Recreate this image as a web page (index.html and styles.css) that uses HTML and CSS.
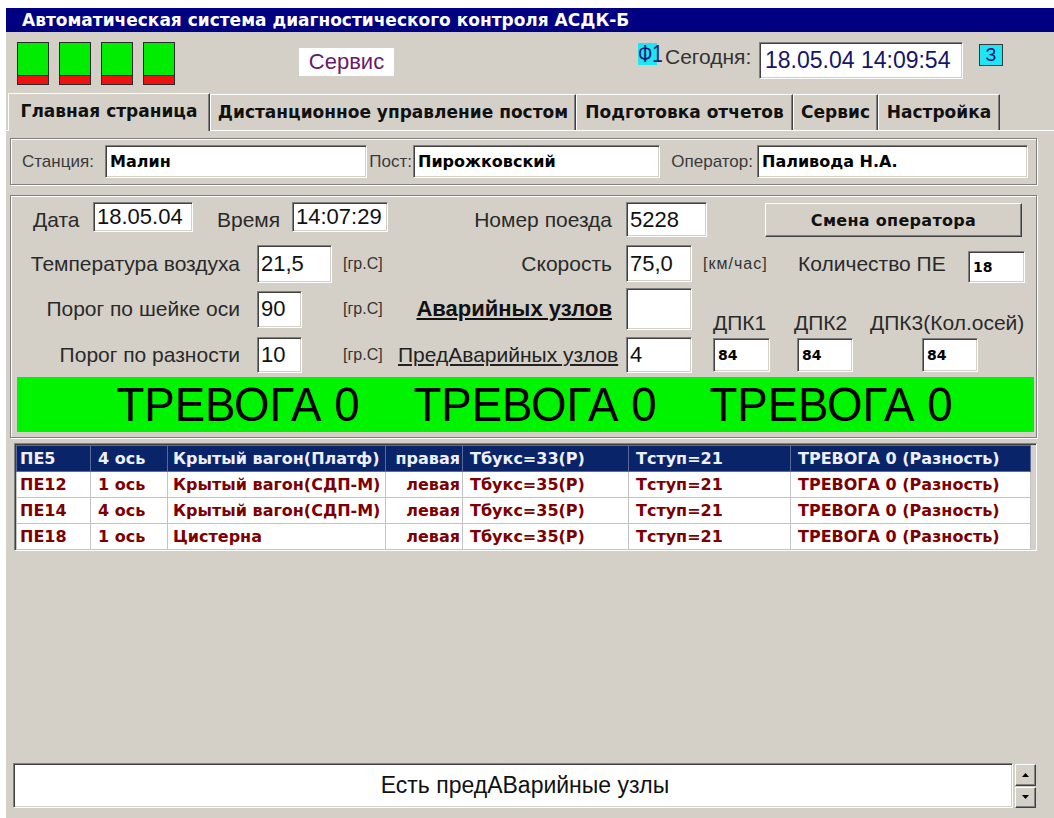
FILE: index.html
```html
<!DOCTYPE html>
<html lang="ru">
<head>
<meta charset="utf-8">
<title>АСДК-Б</title>
<link rel="stylesheet" href="styles.css">
</head>
<body>
<div class="window">
  <div class="titlebar">Автоматическая система диагностического контроля АСДК-Б</div>

  <div class="toolbar">
    <div class="lamps">
      <span class="lamp"></span>
      <span class="lamp"></span>
      <span class="lamp"></span>
      <span class="lamp"></span>
    </div>
    <div class="mode">Сервис</div>
    <div class="fkey"><span>Ф1</span></div>
    <div class="today">Сегодня:</div>
    <div class="now">18.05.04 14:09:54</div>
    <div class="zkey">З</div>
  </div>

  <div class="tabs">
    <div class="tab tab-main active">Главная страница</div>
    <div class="tab tab-remote">Дистанционное управление постом</div>
    <div class="tab tab-reports">Подготовка отчетов</div>
    <div class="tab tab-service">Сервис</div>
    <div class="tab tab-setup">Настройка</div>
  </div>

  <div class="page">
    <div class="group site">
      <span class="cap cap-station">Станция:</span>
      <div class="edit bold w-station">Малин</div>
      <span class="cap cap-post">Пост:</span>
      <div class="edit bold w-post">Пирожковский</div>
      <span class="cap cap-oper">Оператор:</span>
      <div class="edit bold w-oper">Паливода Н.А.</div>
    </div>

    <div class="group form">
      <div class="row row1">
        <span class="cap big c-date">Дата</span>
        <div class="edit num w-date">18.05.04</div>
        <span class="cap big c-time">Время</span>
        <div class="edit num w-time">14:07:29</div>
        <span class="cap big c-mid">Номер поезда</span>
        <div class="edit num w-train">5228</div>
        <button class="btn">Смена оператора</button>
      </div>

      <div class="row row2">
        <span class="cap big c-left">Температура воздуха</span>
        <div class="edit num w-air">21,5</div>
        <span class="unit u-air">[гр.С]</span>
        <span class="cap big c-mid">Скорость</span>
        <div class="edit num w-speed">75,0</div>
        <span class="unit u-speed">[км/час]</span>
        <span class="cap big c-count">Количество ПЕ</span>
        <div class="edit small w-count">18</div>
      </div>

      <div class="row row3">
        <span class="cap big c-left">Порог по шейке оси</span>
        <div class="edit num w-thr">90</div>
        <span class="unit u-thr">[гр.С]</span>
        <span class="cap big c-mid link strong">Аварийных узлов</span>
        <div class="edit num w-alarm"></div>
        <span class="cap big dpk dpk1">ДПК1</span>
        <span class="cap big dpk dpk2">ДПК2</span>
        <span class="cap big dpk dpk3">ДПК3(Кол.осей)</span>
      </div>

      <div class="row row4">
        <span class="cap big c-left">Порог по разности</span>
        <div class="edit num w-thr">10</div>
        <span class="unit u-thr">[гр.С]</span>
        <span class="cap big c-mid link">ПредАварийных узлов</span>
        <div class="edit num w-pre">4</div>
        <div class="edit small w-dpk1">84</div>
        <div class="edit small w-dpk2">84</div>
        <div class="edit small w-dpk3">84</div>
      </div>

      <div class="alarm">
        <span>ТРЕВОГА 0</span>
        <span>ТРЕВОГА 0</span>
        <span>ТРЕВОГА 0</span>
      </div>
    </div>

    <div class="grid">
      <table>
        <colgroup>
          <col class="k-pe"><col class="k-axle"><col class="k-car"><col class="k-side">
          <col class="k-box"><col class="k-step"><col class="k-state">
        </colgroup>
        <tr class="sel">
          <td>ПЕ5</td><td>4 ось</td><td class="car">Крытый вагон(Платф)</td><td class="side">правая</td>
          <td>Тбукс=33(Р)</td><td>Тступ=21</td><td>ТРЕВОГА 0 (Разность)</td>
        </tr>
        <tr>
          <td>ПЕ12</td><td>1 ось</td><td class="car">Крытый вагон(СДП-М)</td><td class="side">левая</td>
          <td>Тбукс=35(Р)</td><td>Тступ=21</td><td>ТРЕВОГА 0 (Разность)</td>
        </tr>
        <tr>
          <td>ПЕ14</td><td>4 ось</td><td class="car">Крытый вагон(СДП-М)</td><td class="side">левая</td>
          <td>Тбукс=35(Р)</td><td>Тступ=21</td><td>ТРЕВОГА 0 (Разность)</td>
        </tr>
        <tr>
          <td>ПЕ18</td><td>1 ось</td><td class="car">Цистерна</td><td class="side">левая</td>
          <td>Тбукс=35(Р)</td><td>Тступ=21</td><td>ТРЕВОГА 0 (Разность)</td>
        </tr>
      </table>
    </div>

    <div class="status">
      <div class="status-text">Есть предАВарийные узлы</div>
      <div class="spin">
        <span class="spin-btn"><svg width="7" height="4" viewBox="0 0 7 4"><path d="M3.5 0 L7 4 H0 Z" fill="#000"/></svg></span>
        <span class="spin-btn"><svg width="7" height="4" viewBox="0 0 7 4"><path d="M0 0 H7 L3.5 4 Z" fill="#000"/></svg></span>
      </div>
    </div>
  </div>
</div>
</body>
</html>
```

FILE: styles.css
```css
* { box-sizing: border-box; }

html, body {
  margin: 0;
  background: #fff;
}

body {
  padding: 8px 0 0 6px;
  font-family: "Liberation Sans", Arial, sans-serif;
  color: #1c1c1c;
}

.window {
  width: 1048px;
  height: 810px;
  background: #d4d0c8;
  display: flex;
  flex-direction: column;
  overflow: hidden;
}

/* caption */
.titlebar {
  flex: none;
  height: 24px;
  background: #000080;
  color: #fff;
  font: bold 17px/24px "DejaVu Sans", sans-serif;
  padding-left: 16px;
  white-space: nowrap;
}

/* lamps, mode and clock */
.toolbar {
  flex: none;
  height: 56px;
  display: flex;
  align-items: flex-start;
  padding-left: 11px;
}

.lamps {
  display: flex;
  gap: 10px;
  margin-top: 10px;
}

.lamp {
  width: 32px;
  height: 43px;
  border: 1px solid #2b2b2b;
  background: linear-gradient(to bottom,
    #00ec00 0, #00ec00 calc(100% - 9px),
    #2b2b2b calc(100% - 9px), #2b2b2b calc(100% - 8px),
    #ee1111 calc(100% - 8px));
}

.mode {
  margin-left: 124px;
  margin-top: 16px;
  width: 95px;
  height: 28px;
  background: #fff;
  color: #6a1a6a;
  font-size: 22px;
  line-height: 28px;
  text-align: center;
}

.fkey {
  margin-left: 244px;
  margin-top: 11px;
  width: 19px;
  height: 22px;
  background: #1fe5f2;
  color: #14147a;
  font-size: 23px;
  line-height: 23px;
  white-space: nowrap;
  overflow: visible;
}

.fkey span {
  display: inline-block;
  transform: scaleX(0.82);
  transform-origin: left center;
}

.today {
  width: 102px;
  margin-top: 12px;
  padding-left: 8px;
  font-size: 21px;
  line-height: 26px;
  color: #333;
  white-space: nowrap;
}

.now {
  width: 204px;
  height: 37px;
  margin-top: 10px;
  background: #fff;
  border: 1px solid;
  border-color: #808080 #fff #fff #808080;
  box-shadow: inset 1px 1px 0 #404040, inset -1px -1px 0 #d4d0c8;
  color: #15156a;
  font-size: 23px;
  line-height: 35px;
  padding-left: 5px;
}

.zkey {
  margin-left: 16px;
  margin-top: 12px;
  width: 24px;
  height: 22px;
  background: #1fe5f2;
  border: 1px solid #3a3a3a;
  color: #12127a;
  font-size: 18px;
  line-height: 20px;
  text-align: center;
}

/* page tabs */
.tabs {
  flex: none;
  height: 42px;
  display: flex;
  align-items: flex-end;
  padding-left: 2px;
}

.tab {
  height: 36px;
  border-top: 1px solid #fff;
  border-left: 1px solid #fff;
  border-right: 1px solid #404040;
  box-shadow: inset -1px 0 0 #808080;
  font: bold 17px/34px "DejaVu Sans", sans-serif;
  color: #111;
  text-align: center;
  white-space: nowrap;
}

.tab.active {
  height: 38px;
  position: relative;
  margin-bottom: -1px;
  background: #d4d0c8;
  z-index: 1;
}

.tab-main { width: 202px; }
.tab-remote { width: 366px; }
.tab-reports { width: 217px; }
.tab-service { width: 85px; }
.tab-setup { width: 122px; }

.page {
  flex: 1;
  border-top: 1px solid #fff;
  padding: 0 17px 10px 4px;
  display: flex;
  flex-direction: column;
}

/* etched group frames */
.group {
  border: 1px solid #808080;
  box-shadow: inset 1px 1px 0 #fff, 1px 1px 0 #fff;
}

.edit {
  background: #fff;
  border: 1px solid;
  border-color: #808080 #fff #fff #808080;
  box-shadow: inset 1px 1px 0 #404040, inset -1px -1px 0 #d4d0c8;
  color: #111;
  white-space: nowrap;
  overflow: hidden;
}

.edit.bold {
  font: bold 16px/31px "DejaVu Sans", sans-serif;
  padding-left: 4px;
  color: #000;
}

.edit.num {
  font-size: 22px;
  padding-left: 3px;
  display: flex;
  align-items: center;
}

.edit.small {
  font: bold 14px "DejaVu Sans", sans-serif;
  padding-left: 4px;
  display: flex;
  align-items: center;
  color: #000;
}

.cap {
  white-space: nowrap;
  color: #2a2a2a;
}

/* station / post / operator */
.site {
  flex: none;
  margin-top: 7px;
  height: 47px;
  display: flex;
  align-items: center;
  padding-left: 1px;
}

.site .cap { font-size: 17px; color: #3a3a3a; }
.cap-station { width: 93px; padding-left: 10px; }
.cap-post { width: 46px; text-align: right; padding-right: 1px; }
.cap-oper { width: 97px; text-align: right; padding-right: 4px; }
.w-station { width: 262px; height: 33px; }
.w-post { width: 247px; height: 33px; }
.w-oper { width: 271px; height: 33px; }

/* main form */
.form {
  flex: none;
  margin-top: 10px;
  height: 243px;
  padding: 6px 1px 0 1px;
  display: flex;
  flex-direction: column;
}

.row {
  display: flex;
  align-items: center;
}

.row1 { height: 35px; }
.row2 { height: 38px; margin-top: 8px; }
.row3 { height: 42px; margin-top: 5px; }
.row4 { height: 36px; margin-top: 7px; }

.cap.big { font-size: 21px; }
.c-date { width: 81px; padding-left: 21px; }
.c-time { width: 99px; padding-left: 24px; }
.c-mid { width: 238px; text-align: right; padding-right: 14px; }
.row1 .c-mid { width: 238px; }
.row2 .c-mid, .row3 .c-mid, .row4 .c-mid { width: 228px; }
.c-left { width: 245px; text-align: right; padding-right: 17px; }
.c-count { width: 170px; }

.link { text-decoration: underline; color: #222; }
.link.strong { font-weight: bold; font-size: 22px; color: #111; }

.unit { font-size: 16px; color: #333; white-space: nowrap; }
.u-air { width: 66px; padding-left: 11px; }
.u-speed { width: 106px; padding-left: 11px; letter-spacing: 1px; }
.u-thr { width: 96px; padding-left: 41px; }

.w-date { width: 100px; height: 30px; align-self: flex-start; }
.w-time { width: 96px; height: 30px; align-self: flex-start; }
.w-train { width: 81px; height: 35px; }
.w-air { width: 75px; height: 38px; }
.w-speed { width: 66px; height: 37px; align-self: flex-start; }
.w-count { width: 57px; height: 32px; align-self: flex-end; }
.w-thr { width: 45px; height: 36px; }
.row3 .w-thr { height: 37px; }
.w-alarm { width: 66px; height: 42px; }
.w-pre { width: 66px; height: 36px; }
.w-dpk1 { width: 57px; height: 34px; margin-left: 21px; }
.w-dpk2 { width: 56px; height: 34px; margin-left: 27px; }
.w-dpk3 { width: 56px; height: 34px; margin-left: 69px; }

.dpk {
  align-self: flex-start;
  margin-top: 23px;
  line-height: 24px;
}
.dpk1 { width: 102px; padding-left: 21px; }
.dpk2 { width: 76px; }

.btn {
  margin-left: 58px;
  margin-top: 1px;
  width: 257px;
  height: 34px;
  background: #d4d0c8;
  border: 1px solid;
  border-color: #fff #404040 #404040 #fff;
  box-shadow: inset -1px -1px 0 #808080;
  font: bold 16px "DejaVu Sans", sans-serif;
  letter-spacing: 0.3px;
  color: #111;
  padding: 0;
}

.alarm {
  margin: 4px 1px 0 5px;
  height: 55px;
  background: #00f400;
  display: flex;
  justify-content: center;
  align-items: center;
  gap: 41px;
  padding-left: 18px;
  font-size: 48px;
  line-height: 55px;
  color: #000;
}

.alarm span {
  display: inline-block;
  transform: scaleX(0.95);
  white-space: nowrap;
}

/* records grid */
.grid {
  flex: none;
  margin-top: 5px;
  margin-left: 4px;
  height: 108px;
  background: #d4d0c8;
  border: 1px solid;
  border-color: #808080 #fff #fff #808080;
  box-shadow: inset 1px 1px 0 #404040;
  padding: 1px 0 0 1px;
}

.grid table {
  border-collapse: collapse;
  table-layout: fixed;
  width: 1014px;
  font: bold 16px "DejaVu Sans", sans-serif;
}

.k-pe { width: 74px; }
.k-axle { width: 77px; }
.k-car { width: 218px; }
.k-side { width: 77px; }
.k-box { width: 166px; }
.k-step { width: 162px; }
.k-state { width: 240px; }

.grid td {
  height: 26px;
  padding: 0 0 0 7px;
  border: 1px solid #c4c4c4;
  background: #fff;
  color: #7c0000;
  white-space: nowrap;
  overflow: hidden;
}

.grid td:first-child { padding-left: 3px; }
.grid td.car { padding-left: 5px; }
.grid td.side { text-align: right; padding: 0 2px 0 0; }

.grid tr.sel td {
  background: #0a246a;
  color: #eef0ff;
  border-color: #5a6a9a;
}

/* message line with spinner */
.status {
  flex: none;
  margin-top: auto;
  margin-left: 3px;
  height: 45px;
  display: flex;
  gap: 2px;
}

.status-text {
  width: 1000px;
  background: #fff;
  border: 1px solid;
  border-color: #808080 #fff #fff #808080;
  box-shadow: inset 1px 1px 0 #404040, inset -1px -1px 0 #d4d0c8;
  font-size: 23px;
  line-height: 43px;
  text-align: center;
  padding-left: 24px;
  color: #111;
}

.spin {
  width: 21px;
  display: flex;
  flex-direction: column;
  gap: 1px;
  padding-top: 1px;
}

.spin-btn {
  flex: 1;
  display: flex;
  align-items: center;
  justify-content: center;
  background: #d4d0c8;
  border: 1px solid;
  border-color: #fff #404040 #404040 #fff;
  box-shadow: inset -1px -1px 0 #808080;
}
```
